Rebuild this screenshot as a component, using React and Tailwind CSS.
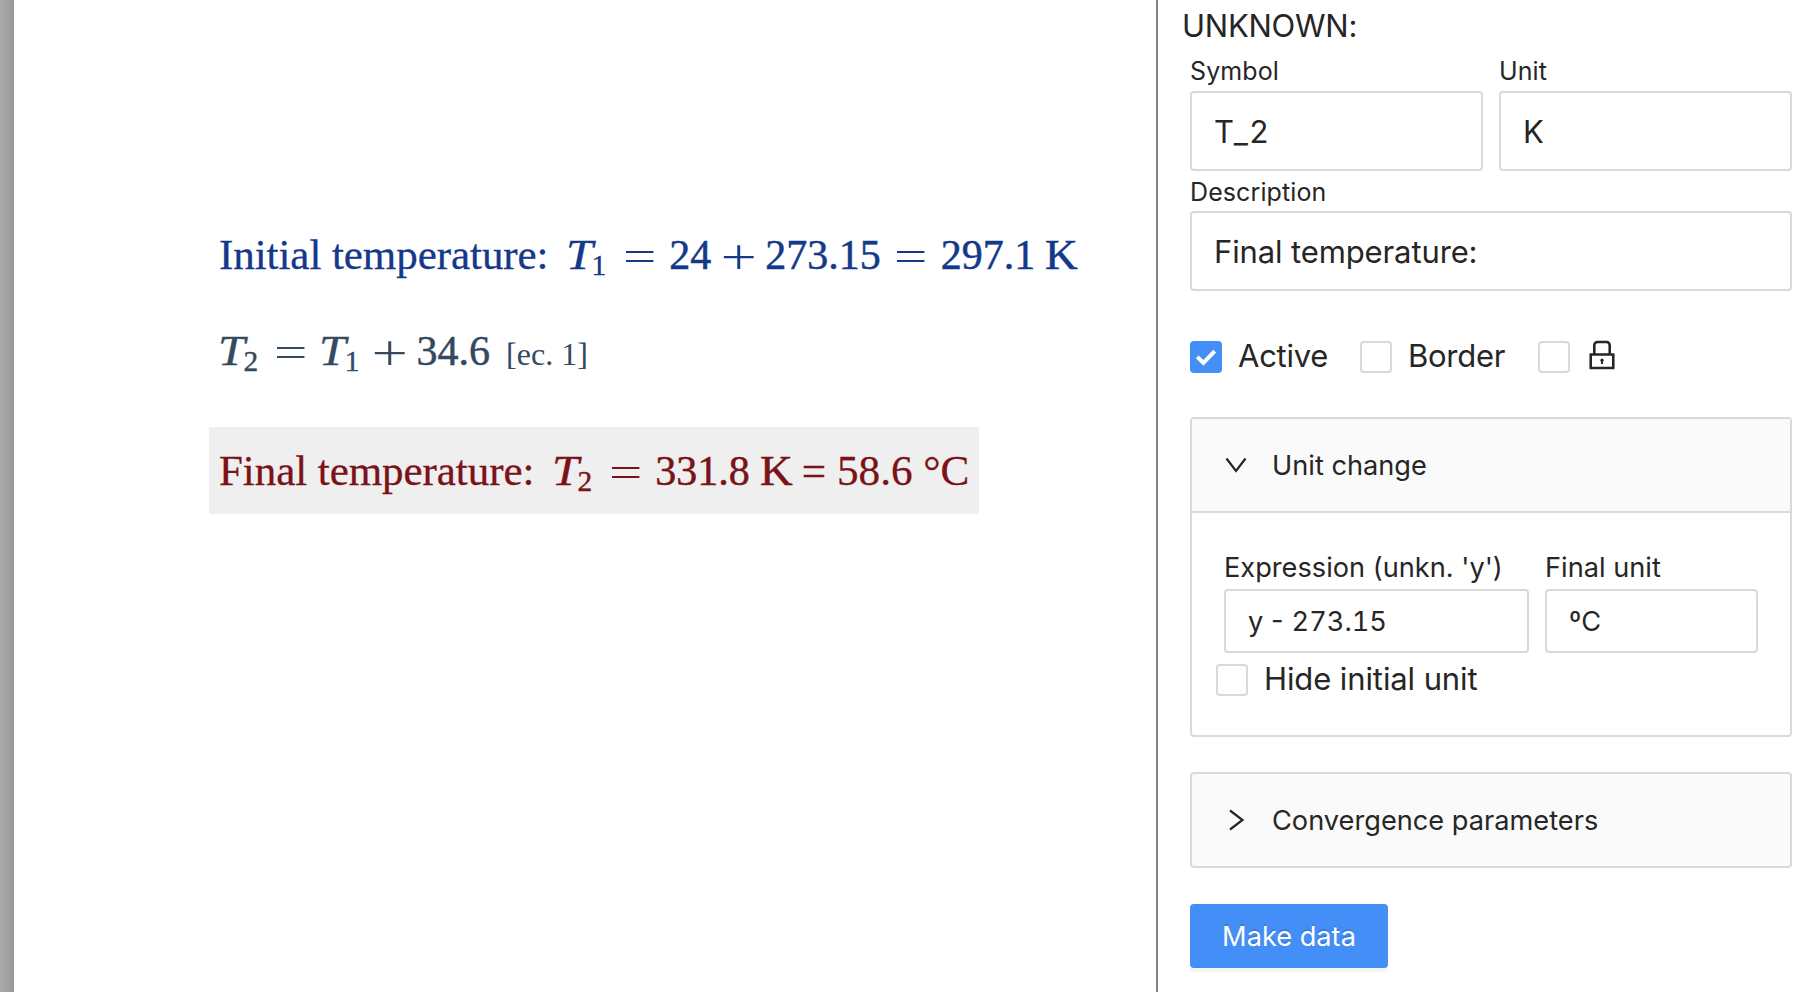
const MATH = 'font-["Liberation_Serif",serif] text-[42px] leading-none whitespace-pre';

function Eq({ className = "w-[60px]" }) {
  return (
    <span className={`inline-block pl-px text-center font-['Inter',sans-serif] text-[46px] font-extralight leading-none ${className}`}>
      <span className="inline-block translate-y-px scale-x-[1.6]">=</span>
    </span>
  );
}

function Plus({ className = "w-[54px]" }) {
  return (
    <span className={`inline-block pl-px text-center font-['Inter',sans-serif] text-[46px] font-extralight leading-none ${className}`}>
      <span className="inline-block translate-y-px scale-x-[1.5] scale-y-[1.2]">+</span>
    </span>
  );
}

function Num({ children }) {
  return <span className="[-webkit-text-stroke:0.5px_currentColor]">{children}</span>;
}

function Kelvin() {
  return <span className="ml-[10px] inline-block w-[33px] origin-left scale-x-[1.08] [-webkit-text-stroke:0.5px_currentColor]">K</span>;
}

function Var({ n }) {
  return (
    <span className="-ml-px inline-flex items-baseline [-webkit-text-stroke:0.4px_currentColor]">
      <span className="inline-block w-[25.5px] origin-left scale-x-[1.15] italic">T</span>
      <span className="relative top-[6px] w-[17.8px] text-[29.4px] leading-none">{n}</span>
    </span>
  );
}

function Field({ label, value, className = "", labelClass, boxClass }) {
  return (
    <div className={`flex flex-col ${className}`}>
      <div className={`whitespace-pre ${labelClass}`}>{label}</div>
      <div className={`flex items-center rounded-[4px] border-2 border-[#d9d9d9] bg-white pl-[22px] whitespace-pre ${boxClass}`}>
        {value}
      </div>
    </div>
  );
}

function Check({ checked }) {
  if (!checked) return <span className="size-8 shrink-0 rounded-[4px] border-2 border-[#d9d9d9] bg-white" />;
  return (
    <span className="size-8 shrink-0 rounded-[4px] bg-[#448ef7]">
      <svg viewBox="0 0 32 32" className="size-8" fill="none" stroke="#fff" strokeWidth="4">
        <path d="M7.3 15.8 L13.4 22 L24.7 10.2" />
      </svg>
    </span>
  );
}

export default function App() {
  return (
    <div className="flex h-[992px] w-[1808px] overflow-hidden bg-white font-['Inter',sans-serif] text-[#262626]">
      <div className="w-[14px] shrink-0 bg-linear-to-r from-[#ababab] to-[#979797]" />
      <main className={`flex w-[1142px] shrink-0 flex-col items-start pl-[205px] pt-[229px] ${MATH}`}>
        <div className="flex h-[42px] items-baseline text-[#14388a]">
          <span className="w-[348px] text-[43px] leading-none tracking-[-0.06px] [-webkit-text-stroke:0.3px_currentColor]">Initial temperature:</span>
          <Var n="1" />
          <Eq />
          <Num>24</Num>
          <Plus />
          <Num>273.15</Num>
          <Eq />
          <Num>297.1</Num>
          <Kelvin />
        </div>
        <div className="mt-[54px] flex h-[42px] items-baseline text-[#34495e]">
          <Var n="2" />
          <Eq className="w-[59px]" />
          <Var n="1" />
          <Plus className="w-[54px]" />
          <Num>34.6</Num>
          <span className="ml-[16px] text-[32px] leading-none">[ec. 1]</span>
        </div>
        <div className="mt-[60px] -ml-[10px] flex h-[87px] w-[770px] items-baseline bg-[#efefef] pl-[10px] pt-[18px] text-[#7a1218]">
          <span className="w-[334px] text-[43px] leading-none tracking-[-0.06px] [-webkit-text-stroke:0.3px_currentColor]">Final temperature:</span>
          <Var n="2" />
          <Eq />
          <Num>331.8</Num>
          <Kelvin />
          <span className="ml-[9px] text-[43.2px] leading-none [-webkit-text-stroke:0.3px_currentColor]">= 58.6 °C</span>
        </div>
      </main>
      <aside className="flex w-[652px] shrink-0 flex-col border-l-2 border-[#808080] pl-8 pr-4">
        <h1 className="-ml-[8px] h-[50px] pt-px text-[31px] leading-[50px] tracking-[-0.25px]">UNKNOWN:</h1>
        <div className="flex gap-4">
          <Field label="Symbol" value="T_2" className="w-[293px]" labelClass="h-[41px] pt-px text-[25px] leading-[41px] tracking-[0.1px]" boxClass="h-20 pt-[2px] text-[31px] tracking-[1.5px]" />
          <Field label="Unit" value="K" className="w-[293px]" labelClass="h-[41px] pt-px text-[25px] leading-[41px] tracking-[0.1px]" boxClass="h-20 pt-[2px] text-[31px]" />
        </div>
        <Field label="Description" value="Final temperature:" labelClass="h-[40px] pt-px text-[25px] leading-[41px] tracking-[0.1px]" boxClass="h-20 pt-[2px] text-[31px] tracking-[-0.12px]" />
        <div className="mt-[50px] flex h-8 items-center text-[31px] tracking-[-0.25px]">
          <Check checked />
          <span className="ml-4 w-[122px] pb-[2px]">Active</span>
          <Check />
          <span className="ml-4 w-[130px] pb-[2px]">Border</span>
          <Check />
          <svg viewBox="64 64 896 896" className="ml-4 mb-[4px] size-8" fill="currentColor">
            <path d="M832 464h-68V240c0-70.700-57.300-128-128-128H388c-70.700 0-128 57.300-128 128v224h-68c-17.700 0-32 14.300-32 32v384c0 17.700 14.300 32 32 32h640c17.700 0 32-14.300 32-32V496c0-17.700-14.300-32-32-32zM332 240c0-30.900 25.100-56 56-56h248c30.900 0 56 25.100 56 56v224H332V240zm460 600H232V536h560v304zM484 701v53c0 4.400 3.600 8 8 8h40c4.400 0 8-3.600 8-8v-53a48.010 48.010 0 10-56 0z" />
          </svg>
        </div>
        <section className="mt-[44px] h-[320px] rounded-[4px] border-2 border-[#d9d9d9]">
          <div className="flex h-[94px] items-center border-b-2 border-[#d9d9d9] bg-[#fafafa] pl-[32px] text-[27.2px]">
            <svg viewBox="0 0 24 24" className="size-6" fill="none" stroke="currentColor" strokeWidth="2.200">
              <path d="M2.500 5.500 L12 18 L21.500 5.500" />
            </svg>
            <span className="ml-[24px] pt-[2px]">Unit change</span>
          </div>
          <div className="flex gap-4 pl-8 pt-[33px]">
            <Field label="Expression (unkn. 'y')" value="y - 273.15" className="w-[305px]" labelClass="h-[43px] text-[27.2px] leading-[43px]" boxClass="h-16 pt-[2px] text-[27.2px] tabular-nums [word-spacing:-2px]" />
            <Field label="Final unit" value="ºC" className="w-[213px]" labelClass="h-[43px] text-[27.2px] leading-[43px]" boxClass="h-16 pt-[2px] text-[27.2px]" />
          </div>
          <div className="mt-[11px] flex h-8 items-center pl-6 text-[31px] tracking-[-0.1px]">
            <Check />
            <span className="ml-4 pb-[2px]">Hide initial unit</span>
          </div>
        </section>
        <section className="mt-[35px] flex h-[96px] items-center rounded-[4px] border-2 border-[#d9d9d9] bg-[#fafafa] pl-8 text-[27.2px]">
          <svg viewBox="0 0 24 24" className="size-6" fill="none" stroke="currentColor" strokeWidth="2.200">
            <path d="M6 2.500 L18.500 12 L6 21.500" />
          </svg>
          <span className="ml-[24px] pt-[2px]">Convergence parameters</span>
        </section>
        <button className="mt-[36px] h-16 w-[198px] rounded-[4px] bg-[#448ef7] pt-[2px] text-[27.2px] text-white shadow-[0_4px_0_rgba(0,0,0,0.043)] [text-shadow:0_-2px_0_rgba(0,0,0,0.12)]">Make data</button>
      </aside>
    </div>
  );
}
